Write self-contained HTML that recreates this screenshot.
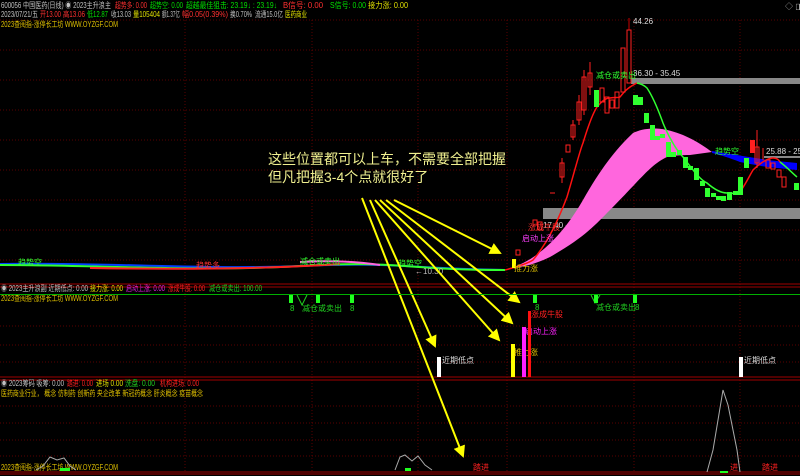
<!DOCTYPE html>
<html><head><meta charset="utf-8"><style>
html,body{margin:0;padding:0;background:#000;}
svg{display:block;font-family:"Liberation Sans","Noto Sans CJK SC",sans-serif;}
</style></head><body>
<svg width="800" height="476" viewBox="0 0 800 476" xmlns="http://www.w3.org/2000/svg">
<rect width="800" height="476" fill="#000"/>
<defs>
<marker id="ah" markerWidth="6" markerHeight="6" refX="5" refY="3" orient="auto" markerUnits="strokeWidth"><path d="M0,0 L6,3 L0,6 Z" fill="#ffff00"/></marker>
</defs>
<g stroke="#5a0000" stroke-width="1" stroke-dasharray="1,2">
<line x1="0" y1="20" x2="800" y2="20"/><line x1="0" y1="50" x2="800" y2="50"/><line x1="0" y1="80" x2="800" y2="80"/><line x1="0" y1="110" x2="800" y2="110"/><line x1="0" y1="140" x2="800" y2="140"/><line x1="0" y1="170" x2="800" y2="170"/><line x1="0" y1="200" x2="800" y2="200"/><line x1="0" y1="230" x2="800" y2="230"/><line x1="0" y1="260" x2="800" y2="260"/>
<line x1="0" y1="326" x2="800" y2="326"/><line x1="0" y1="345" x2="800" y2="345"/><line x1="0" y1="362" x2="800" y2="362"/>
<line x1="0" y1="406" x2="800" y2="406"/><line x1="0" y1="423" x2="800" y2="423"/><line x1="0" y1="440" x2="800" y2="440"/><line x1="0" y1="456" x2="800" y2="456"/>
<line x1="185" y1="20" x2="185" y2="472"/><line x1="312" y1="20" x2="312" y2="472"/><line x1="418" y1="20" x2="418" y2="472"/><line x1="507" y1="20" x2="507" y2="472"/><line x1="634" y1="20" x2="634" y2="472"/><line x1="740" y1="20" x2="740" y2="472"/>
</g>
<g stroke="#a00000" stroke-width="1">
<line x1="0" y1="284" x2="800" y2="284"/><line x1="0" y1="287" x2="800" y2="287"/>
<line x1="0" y1="377" x2="800" y2="377"/><line x1="0" y1="380" x2="800" y2="380"/>
<line x1="0" y1="472" x2="800" y2="472"/><line x1="0" y1="474" x2="800" y2="474"/>
</g>
<g font-size="8" lengthAdjust="spacingAndGlyphs">
<text x="1" y="8" fill="#c0c0c0" textLength="110" lengthAdjust="spacingAndGlyphs">600056 中国医药(日线) ◉ 2023主升浪主</text>
<text x="115" y="8" fill="#ff3030" textLength="32" lengthAdjust="spacingAndGlyphs">超势多: 0.00</text>
<text x="150" y="8" fill="#00e000" textLength="33" lengthAdjust="spacingAndGlyphs">超势空: 0.00</text>
<text x="186" y="8" fill="#00e000" textLength="91" lengthAdjust="spacingAndGlyphs">超越最佳狙击: 23.19↓ : 23.19↓</text>
<text x="283" y="8" fill="#ff3030" textLength="40" lengthAdjust="spacingAndGlyphs">B信号: 0.00</text>
<text x="330" y="8" fill="#00e000" textLength="36" lengthAdjust="spacingAndGlyphs">S信号: 0.00</text>
<text x="368" y="8" fill="#e0e000" textLength="40" lengthAdjust="spacingAndGlyphs">接力涨: 0.00</text>
<text x="1" y="17" fill="#c0c0c0" textLength="37" lengthAdjust="spacingAndGlyphs">2023/07/21/五</text>
<text x="40" y="17" fill="#ff3030" textLength="21" lengthAdjust="spacingAndGlyphs">开13.00</text>
<text x="63" y="17" fill="#ff3030" textLength="22" lengthAdjust="spacingAndGlyphs">高13.06</text>
<text x="87" y="17" fill="#00e000" textLength="21" lengthAdjust="spacingAndGlyphs">低12.87</text>
<text x="111" y="17" fill="#c0c0c0" textLength="20" lengthAdjust="spacingAndGlyphs">收13.03</text>
<text x="133" y="17" fill="#e0e000" textLength="27" lengthAdjust="spacingAndGlyphs">量105404</text>
<text x="162" y="17" fill="#c0c0c0" textLength="18" lengthAdjust="spacingAndGlyphs">额1.37亿</text>
<text x="182" y="17" fill="#ff3030" textLength="46" lengthAdjust="spacingAndGlyphs">幅0.05(0.39%)</text>
<text x="230" y="17" fill="#c0c0c0" textLength="22" lengthAdjust="spacingAndGlyphs">换0.70%</text>
<text x="255" y="17" fill="#c0c0c0" textLength="28" lengthAdjust="spacingAndGlyphs">流通15.0亿</text>
<text x="285" y="17" fill="#e0e000" textLength="22" lengthAdjust="spacingAndGlyphs">医药商业</text>
<text x="1" y="27" fill="#e0c000" textLength="117" lengthAdjust="spacingAndGlyphs">2023查阅指-涨停长工坊 WWW.OYZGF.COM</text>
<text x="785" y="9" fill="#aaa">◇ ◨</text>
</g>
<!-- gray zones -->
<rect x="631" y="78" width="169" height="6" fill="#888"/>
<text x="633" y="76" font-size="8" fill="#ddd">36.30 - 35.45</text>
<rect x="543" y="208" width="257" height="11" fill="#888"/>
<text x="543" y="228" font-size="8" fill="#ddd">17.40 - 16.</text>
<rect x="764" y="156" width="36" height="2" fill="#888"/>
<text x="766" y="154" font-size="8" fill="#ddd">25.88 - 25.6</text>
<text x="633" y="24" font-size="8" fill="#ddd">44.26</text>
<line x1="629" y1="18" x2="629" y2="30" stroke="#c00"/>
<!-- pink band -->
<path d="M510 268 C 533 262, 560 240, 583 200 C 600 170, 615 150, 633 133 C 645 127, 660 128, 667 130 C 685 134, 700 143, 712 152 L 690 155 C 680 155, 670 156, 667 157 C 650 165, 640 180, 610 210 C 595 225, 585 237, 550 257 C 535 264, 525 267, 510 268 Z" fill="#ff66dd"/>
<!-- blue band -->
<path d="M712 151 C 730 154, 750 157, 767 160 L 797 163 L 797 170 L 767 167 C 755 165, 745 163, 740 162 C 730 158, 720 155, 712 153 Z" fill="#0000ff"/>
<!-- flat lines left -->
<g fill="none" stroke-width="2">
<path d="M0 264 C 100 262, 200 270, 300 266 S 400 268, 505 270" stroke="#0040ff"/>
<path d="M0 265 C 100 265, 200 272, 300 266 S 400 270, 505 270" stroke="#30ff30"/>
<path d="M90 268 C 200 270, 280 268, 340 264" stroke="#ff2020"/>
<path d="M300 262 C 330 260, 360 262, 380 265" stroke="#ff66dd"/>
</g>
<!-- MA line -->
<path d="M505 270 C 520 266, 530 262, 533 260 C 550 240, 560 215, 567 197 C 575 170, 580 150, 583 143 C 590 120, 595 110, 597 107 C 603 100, 606 98, 610 98 C 615 97, 618 98, 620 97 C 624 92, 627 88, 637 83" fill="none" stroke="#ff1010" stroke-width="1.5"/>
<path d="M637 83 C 642 84, 645 86, 647 88 C 655 100, 660 115, 663 123 C 670 140, 678 152, 683 157 C 693 170, 700 180, 707 183 C 715 190, 722 193, 727 193 C 733 194, 737 193, 740 192" fill="none" stroke="#30ff30" stroke-width="1.5"/>
<path d="M740 192 C 745 185, 750 175, 753 170 C 760 163, 768 158, 773 158 C 777 158, 779 160, 780 162" fill="none" stroke="#ff1010" stroke-width="1.5"/>
<path d="M780 162 C 788 168, 792 173, 797 177" fill="none" stroke="#30ff30" stroke-width="1.5"/>
<!-- candles -->
<g stroke="#ff2020" fill="none" stroke-width="1">
<rect x="516" y="250" width="4" height="5"/><rect x="533" y="220" width="4" height="5"/><rect x="538" y="222" width="4" height="8"/>
<line x1="550" y1="193" x2="555" y2="193"/>
<rect x="560" y="163" width="4" height="14"/><line x1="562" y1="158" x2="562" y2="183"/>
<rect x="566" y="145" width="4" height="7"/>
<rect x="571" y="125" width="4" height="12"/><line x1="573" y1="120" x2="573" y2="140"/>
<rect x="577" y="102" width="4" height="18"/><line x1="579" y1="95" x2="579" y2="125"/>
<rect x="582" y="77" width="4" height="33"/><line x1="584" y1="70" x2="584" y2="115"/>
<rect x="588" y="73" width="4" height="14"/><line x1="590" y1="62" x2="590" y2="95"/>
<rect x="600" y="88" width="4" height="14"/><rect x="605" y="97" width="4" height="16"/><rect x="610" y="100" width="4" height="8"/><rect x="615" y="92" width="4" height="16"/>
<rect x="621" y="48" width="4" height="44"/><rect x="627" y="30" width="4" height="53"/>
<rect x="755" y="147" width="4" height="16"/><line x1="757" y1="130" x2="757" y2="168"/>
<line x1="763" y1="148" x2="763" y2="160"/><rect x="766" y="160" width="4" height="8"/><rect x="771" y="163" width="4" height="6"/>
<rect x="777" y="170" width="4" height="7"/><rect x="782" y="177" width="4" height="10"/>
</g>
<rect x="750" y="140" width="5" height="13" fill="#ff2020"/>
<g fill="#30ff30">
<rect x="594" y="90" width="5" height="17"/><rect x="633" y="95" width="5" height="10"/><rect x="638" y="97" width="5" height="8"/><rect x="644" y="113" width="5" height="10"/><rect x="650" y="125" width="5" height="15"/><rect x="655" y="136" width="5" height="4"/><rect x="660" y="134" width="5" height="4"/><rect x="666" y="142" width="5" height="15"/><rect x="671" y="152" width="5" height="5"/><rect x="677" y="150" width="5" height="5"/><rect x="683" y="157" width="5" height="11"/><rect x="688" y="166" width="5" height="4"/><rect x="694" y="168" width="5" height="12"/><rect x="700" y="181" width="5" height="5"/><rect x="705" y="188" width="5" height="9"/><rect x="711" y="193" width="5" height="4"/><rect x="716" y="196" width="5" height="4"/><rect x="721" y="196" width="5" height="5"/><rect x="727" y="192" width="5" height="8"/><rect x="733" y="191" width="5" height="4"/><rect x="738" y="177" width="5" height="18"/><rect x="744" y="158" width="5" height="10"/><rect x="794" y="183" width="5" height="7"/>
</g>
<rect x="512" y="259" width="4" height="9" fill="#ffff00"/>
<g font-size="8">
<text x="596" y="78" fill="#30ff30">减仓或卖出</text>
<text x="715" y="154" fill="#30ff30">趋势空</text>
<text x="528" y="230" fill="#ff3030">涨成牛股</text>
<text x="522" y="241" fill="#ff40ff">启动上涨</text>
<text x="514" y="271" fill="#e0c000">推力涨</text>
<text x="18" y="265" fill="#30ff30">趋势空</text>
<text x="196" y="268" fill="#ff3030">趋势多</text>
<text x="300" y="264" fill="#30ff30">减仓或卖出</text>
<text x="398" y="266" fill="#30ff30">趋势空</text>
<text x="415" y="274" fill="#bbb">←10.30</text>
</g>
<!-- big text -->
<text x="268" y="164" font-size="14" fill="#f0f090">这些位置都可以上车，不需要全部把握</text>
<text x="268" y="182" font-size="14" fill="#f0f090">但凡把握3-4个点就很好了</text>
<!-- arrows -->
<g stroke="#ffff00" stroke-width="2" marker-end="url(#ah)">
<line x1="394" y1="200" x2="500" y2="253"/>
<line x1="386" y1="200" x2="519" y2="302"/>
<line x1="380" y1="200" x2="512" y2="323"/>
<line x1="375" y1="200" x2="499" y2="340"/>
<line x1="370" y1="200" x2="435" y2="346"/>
<line x1="362" y1="198" x2="463" y2="456"/>
</g>
<!-- panel 2 -->
<g font-size="8">
<text x="1" y="291" fill="#c0c0c0" textLength="87" lengthAdjust="spacingAndGlyphs">◉ 2023主升浪副 近期低点: 0.00</text>
<text x="90" y="291" fill="#e0e000" textLength="33" lengthAdjust="spacingAndGlyphs">接力涨: 0.00</text>
<text x="126" y="291" fill="#e020e0" textLength="39" lengthAdjust="spacingAndGlyphs">启动上涨: 0.00</text>
<text x="168" y="291" fill="#ff2020" textLength="37" lengthAdjust="spacingAndGlyphs">涨成牛股: 0.00</text>
<text x="209" y="291" fill="#20d020" textLength="53" lengthAdjust="spacingAndGlyphs">减仓或卖出: 100.00</text>
<text x="1" y="301" fill="#e0c000" textLength="117" lengthAdjust="spacingAndGlyphs">2023查阅指-涨停长工坊 WWW.OYZGF.COM</text>
</g>
<line x1="0" y1="294.5" x2="800" y2="294.5" stroke="#00b000"/>
<path d="M297 295 L302 305 L307 295" fill="none" stroke="#20d020"/>
<path d="M591 295 L595 303 L600 295" fill="none" stroke="#20d020"/>
<g fill="#20ff20"><rect x="289" y="295" width="4" height="8"/><rect x="316" y="295" width="4" height="8"/><rect x="350" y="295" width="4" height="8"/><rect x="533" y="295" width="4" height="8"/><rect x="594" y="295" width="4" height="8"/><rect x="633" y="295" width="4" height="8"/></g>
<g font-size="8" fill="#20d020"><text x="290" y="311">8</text><text x="302" y="311">减仓或卖出</text><text x="350" y="311">8</text><text x="535" y="310">8</text><text x="596" y="310">减仓或卖出</text><text x="635" y="310">8</text></g>
<rect x="437" y="357" width="4" height="20" fill="#fff"/><text x="442" y="363" font-size="8" fill="#ddd">近期低点</text>
<rect x="739" y="357" width="4" height="20" fill="#fff"/><text x="744" y="363" font-size="8" fill="#ddd">近期低点</text>
<rect x="511" y="344" width="4" height="33" fill="#ffff00"/><text x="514" y="355" font-size="8" fill="#e0c000">推力涨</text>
<rect x="522" y="327" width="4" height="50" fill="#ff20ff"/><text x="525" y="334" font-size="8" fill="#ff20ff">启动上涨</text>
<rect x="528" y="311" width="3" height="66" fill="#ff1010"/><text x="531" y="317" font-size="8" fill="#ff2020">涨成牛股</text>
<!-- panel 3 -->
<g font-size="8">
<text x="1" y="386" fill="#c0c0c0" textLength="63" lengthAdjust="spacingAndGlyphs">◉ 2023筹码 吸筹: 0.00</text>
<text x="67" y="386" fill="#ff2020" textLength="26" lengthAdjust="spacingAndGlyphs">踏进: 0.00</text>
<text x="96" y="386" fill="#e0e000" textLength="27" lengthAdjust="spacingAndGlyphs">进场 0.00</text>
<text x="125" y="386" fill="#20d020" textLength="30" lengthAdjust="spacingAndGlyphs">洗盘: 0.00</text>
<text x="160" y="386" fill="#ff2020" textLength="39" lengthAdjust="spacingAndGlyphs">机构进场: 0.00</text>
<text x="1" y="396" fill="#e0c000" textLength="202" lengthAdjust="spacingAndGlyphs">医药商业行业， 概念 仿制药 创新药 央企改革 新冠药概念 肝炎概念 疫苗概念</text>
<text x="1" y="470" fill="#e0c000" textLength="117" lengthAdjust="spacingAndGlyphs">2023查阅指-涨停长工坊 WWW.OYZGF.COM</text>
</g>
<path d="M36 470 L43 466 L50 457 L57 460 L64 458 L70 466 L76 470" fill="none" stroke="#aaa"/>
<path d="M395 470 L400 457 L405 455 L412 461 L418 456 L425 465 L432 470" fill="none" stroke="#aaa"/>
<path d="M707 472 L713 450 L718 420 L723 390 L728 405 L733 430 L737 450 L740 472" fill="none" stroke="#aaa"/>
<g font-size="8" fill="#ff2020"><text x="473" y="470">踏进</text><text x="730" y="470">进</text><text x="762" y="470">踏进</text></g>
<rect x="60" y="468" width="10" height="3" fill="#20ff20"/><rect x="405" y="468" width="6" height="3" fill="#20ff20"/><rect x="720" y="471" width="8" height="2" fill="#20ff20"/>
</svg>
</body></html>
